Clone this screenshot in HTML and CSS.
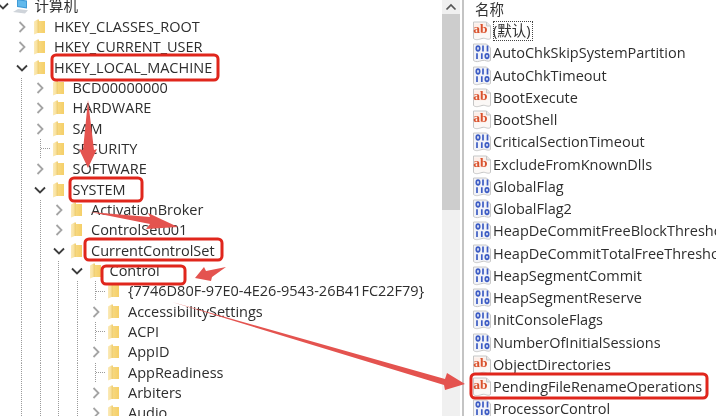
FILE: index.html
```html
<!DOCTYPE html>
<html lang="zh-CN">
<head>
<meta charset="utf-8">
<title>注册表编辑器</title>
<link rel="stylesheet" href="styles.css">
</head>
<body>
<svg class="defs" width="0" height="0" aria-hidden="true">
  <defs>
    <linearGradient id="fold" x1="0" x2="1" y1="0" y2="0">
      <stop offset="0" stop-color="#fbeab8"/>
      <stop offset="0.3" stop-color="#f8e09a"/>
      <stop offset="0.36" stop-color="#e9c66a"/>
      <stop offset="0.45" stop-color="#f7d87f"/>
      <stop offset="1" stop-color="#f5cf68"/>
    </linearGradient>
  </defs>
  <symbol id="right" viewBox="0 0 10 12"><path d="M2.500 1 7.500 6l-5 5" fill="none" stroke="#a4a4a4" stroke-width="1.800"/></symbol>
  <symbol id="down" viewBox="0 0 12 10"><path d="M1 2.500 6 7.500l5-5" fill="none" stroke="#3d3d3d" stroke-width="1.800"/></symbol>
  <symbol id="folder" viewBox="0 0 11 16">
    <path d="M0 2.500 3.500 .5H5V2h6v12H3.500L0 15.500z" fill="url(#fold)"/>
  </symbol>
  <symbol id="ab" viewBox="0 0 18 20">
    <path d="M.5 1h13l4 4v12.500c-3 2-5-1-8.500 0S3 19.500.5 17.500z" fill="#fbf8f6" stroke="#c6c6c6"/>
    <path d="M13.500 1v4h4" fill="#e6e6e6" stroke="#c6c6c6"/>
    <path d="M1 2.500h12v10H1z" fill="#fdeee8"/>
    <text x="7.500" y="12" class="ab-text">ab</text>
  </symbol>
  <symbol id="bin" viewBox="0 0 18 20">
    <path d="M.5 1h13l4 4v12.500c-3 2-5-1-8.500 0S3 19.500.5 17.500z" fill="#f2f3f8" stroke="#c8c8c8"/>
    <g fill="none" stroke="#3d5cc4" stroke-width="1.700">
      <ellipse cx="5" cy="5.500" rx="1.700" ry="2.300"/>
      <path d="M10 2.600v5.800M14.500 2.600v5.800"/>
      <path d="M4 10.200v5.800M8.800 10.200v5.800"/>
      <ellipse cx="14" cy="13.100" rx="1.700" ry="2.300"/>
    </g>
  </symbol>
</svg>

<main class="editor">
  <section class="tree">
    <div class="row root"><span class="cell"><svg class="chev-down"><use href="#down"/></svg></span><svg class="computer" viewBox="0 0 16 15"><path d="M4 0l10 1.500v8L4 8z" fill="#3f9bd8"/><path d="M5 1.300l8 1.200v5.800L5 7.100z" fill="#62b9ec"/><path d="M0 13l5-3 10 1.200-3 3.300z" fill="#cfd4da"/></svg><span class="label">计算机</span></div>

    <div class="row"><span class="cell"><svg class="chev-right"><use href="#right"/></svg></span><svg class="folder"><use href="#folder"/></svg><span class="label">HKEY_CLASSES_ROOT</span></div>
    <div class="row"><span class="cell"><svg class="chev-right"><use href="#right"/></svg></span><svg class="folder"><use href="#folder"/></svg><span class="label">HKEY_CURRENT_USER</span></div>
    <div class="row"><span class="cell"><svg class="chev-down"><use href="#down"/></svg></span><svg class="folder"><use href="#folder"/></svg><span class="label">HKEY_LOCAL_MACHINE</span></div>

    <div class="row"><i class="guide"></i><span class="cell"><svg class="chev-right"><use href="#right"/></svg></span><svg class="folder"><use href="#folder"/></svg><span class="label">BCD00000000</span></div>
    <div class="row"><i class="guide"></i><span class="cell"><svg class="chev-right"><use href="#right"/></svg></span><svg class="folder"><use href="#folder"/></svg><span class="label">HARDWARE</span></div>
    <div class="row"><i class="guide"></i><span class="cell"><svg class="chev-right"><use href="#right"/></svg></span><svg class="folder"><use href="#folder"/></svg><span class="label">SAM</span></div>
    <div class="row"><i class="guide"></i><i class="guide tick"></i><svg class="folder"><use href="#folder"/></svg><span class="label">SECURITY</span></div>
    <div class="row"><i class="guide"></i><span class="cell"><svg class="chev-right"><use href="#right"/></svg></span><svg class="folder"><use href="#folder"/></svg><span class="label">SOFTWARE</span></div>
    <div class="row"><i class="guide"></i><span class="cell"><svg class="chev-down"><use href="#down"/></svg></span><svg class="folder"><use href="#folder"/></svg><span class="label">SYSTEM</span></div>

    <div class="row"><i class="guide"></i><i class="guide"></i><span class="cell"><svg class="chev-right"><use href="#right"/></svg></span><svg class="folder"><use href="#folder"/></svg><span class="label">ActivationBroker</span></div>
    <div class="row"><i class="guide"></i><i class="guide"></i><span class="cell"><svg class="chev-right"><use href="#right"/></svg></span><svg class="folder"><use href="#folder"/></svg><span class="label">ControlSet001</span></div>
    <div class="row"><i class="guide"></i><i class="guide"></i><span class="cell"><svg class="chev-down"><use href="#down"/></svg></span><svg class="folder"><use href="#folder"/></svg><span class="label">CurrentControlSet</span></div>

    <div class="row"><i class="guide"></i><i class="guide"></i><i class="guide"></i><span class="cell"><svg class="chev-down"><use href="#down"/></svg></span><svg class="folder"><use href="#folder"/></svg><span class="label">Control</span></div>

    <div class="row"><i class="guide"></i><i class="guide"></i><i class="guide"></i><i class="guide"></i><i class="guide tick"></i><svg class="folder"><use href="#folder"/></svg><span class="label">{7746D80F-97E0-4E26-9543-26B41FC22F79}</span></div>
    <div class="row"><i class="guide"></i><i class="guide"></i><i class="guide"></i><i class="guide"></i><span class="cell"><svg class="chev-right"><use href="#right"/></svg></span><svg class="folder"><use href="#folder"/></svg><span class="label">AccessibilitySettings</span></div>
    <div class="row"><i class="guide"></i><i class="guide"></i><i class="guide"></i><i class="guide"></i><i class="guide tick"></i><svg class="folder"><use href="#folder"/></svg><span class="label">ACPI</span></div>
    <div class="row"><i class="guide"></i><i class="guide"></i><i class="guide"></i><i class="guide"></i><span class="cell"><svg class="chev-right"><use href="#right"/></svg></span><svg class="folder"><use href="#folder"/></svg><span class="label">AppID</span></div>
    <div class="row"><i class="guide"></i><i class="guide"></i><i class="guide"></i><i class="guide"></i><i class="guide tick"></i><svg class="folder"><use href="#folder"/></svg><span class="label">AppReadiness</span></div>
    <div class="row"><i class="guide"></i><i class="guide"></i><i class="guide"></i><i class="guide"></i><span class="cell"><svg class="chev-right"><use href="#right"/></svg></span><svg class="folder"><use href="#folder"/></svg><span class="label">Arbiters</span></div>
    <div class="row"><i class="guide"></i><i class="guide"></i><i class="guide"></i><i class="guide"></i><span class="cell"><svg class="chev-right"><use href="#right"/></svg></span><svg class="folder"><use href="#folder"/></svg><span class="label">Audio</span></div>
  </section>

  <div class="scrollbar">
    <div class="scroll-btn"><svg class="scroll-arrow" viewBox="0 0 12 8"><path d="M1.500 6.500 6 2l4.500 4.500" fill="none" stroke="#555" stroke-width="1.700"/></svg></div>
    <div class="scroll-thumb"></div>
  </div>
  <div class="divider"></div>

  <section class="values">
    <div class="values-head">名称</div>
    <div class="value"><svg class="vicon"><use href="#ab"/></svg><span class="vname selected">(默认)</span></div>
    <div class="value"><svg class="vicon"><use href="#bin"/></svg><span class="vname">AutoChkSkipSystemPartition</span></div>
    <div class="value"><svg class="vicon"><use href="#bin"/></svg><span class="vname">AutoChkTimeout</span></div>
    <div class="value"><svg class="vicon"><use href="#ab"/></svg><span class="vname">BootExecute</span></div>
    <div class="value"><svg class="vicon"><use href="#ab"/></svg><span class="vname">BootShell</span></div>
    <div class="value"><svg class="vicon"><use href="#bin"/></svg><span class="vname">CriticalSectionTimeout</span></div>
    <div class="value"><svg class="vicon"><use href="#ab"/></svg><span class="vname">ExcludeFromKnownDlls</span></div>
    <div class="value"><svg class="vicon"><use href="#bin"/></svg><span class="vname">GlobalFlag</span></div>
    <div class="value"><svg class="vicon"><use href="#bin"/></svg><span class="vname">GlobalFlag2</span></div>
    <div class="value"><svg class="vicon"><use href="#bin"/></svg><span class="vname">HeapDeCommitFreeBlockThreshold</span></div>
    <div class="value"><svg class="vicon"><use href="#bin"/></svg><span class="vname">HeapDeCommitTotalFreeThreshold</span></div>
    <div class="value"><svg class="vicon"><use href="#bin"/></svg><span class="vname">HeapSegmentCommit</span></div>
    <div class="value"><svg class="vicon"><use href="#bin"/></svg><span class="vname">HeapSegmentReserve</span></div>
    <div class="value"><svg class="vicon"><use href="#bin"/></svg><span class="vname">InitConsoleFlags</span></div>
    <div class="value"><svg class="vicon"><use href="#bin"/></svg><span class="vname">NumberOfInitialSessions</span></div>
    <div class="value"><svg class="vicon"><use href="#ab"/></svg><span class="vname">ObjectDirectories</span></div>
    <div class="value"><svg class="vicon"><use href="#ab"/></svg><span class="vname">PendingFileRenameOperations</span></div>
    <div class="value"><svg class="vicon"><use href="#bin"/></svg><span class="vname">ProcessorControl</span></div>
  </section>

  <svg class="marks" viewBox="0 0 720 416" aria-hidden="true">
    <g class="arrows">
      <path d="M88 100 L94 150 L97 149 L88 168 L79 149 L83 150 Z"/>
      <path d="M90 212 L150 217 L148 213 L178 227 L146 229 L150 224 Z"/>
      <path d="M226 267 L212 277 L211 281 L195 278 L204 267 L206 271 Z"/>
      <path d="M172 302 L445 379 L447 373 L465 384 L445 390 L444 385 Z"/>
    </g>
    <g class="boxes">
      <rect x="52" y="55" width="166" height="25" rx="4"/>
      <rect x="70" y="178" width="72" height="23" rx="4"/>
      <rect x="85" y="239" width="137" height="21" rx="4"/>
      <rect x="102" y="266" width="83" height="18" rx="4"/>
      <rect x="471" y="374" width="236" height="24" rx="4"/>
    </g>
  </svg>
</main>
</body>
</html>
```
FILE: styles.css
```css
html, body {
  margin: 0;
  padding: 0;
  background: #fff;
}

.defs {
  position: absolute;
}

.editor {
  position: relative;
  display: flex;
  width: 720px;
  height: 416px;
  overflow: hidden;
  background: #fff;
  color: #2e2e2e;
  font-family: "Open Sans", "Noto Sans CJK SC", sans-serif;
  font-size: 14.5px;
  filter: blur(0.35px);
}

.tree {
  flex: 0 0 442px;
  margin-top: -3.7px;
  padding-left: 12.5px;
  box-sizing: border-box;
  overflow: hidden;
}

.row {
  display: flex;
  align-items: center;
  height: 20.35px;
  white-space: nowrap;
}

.root {
  margin-left: -18.5px;
}

.cell {
  flex: 0 0 18.5px;
  display: flex;
  justify-content: center;
  align-items: center;
}

.guide {
  flex: 0 0 18.5px;
  align-self: stretch;
  background: repeating-linear-gradient(#9a9a9a 0 1px, transparent 1px 2px) center / 1px 100% no-repeat;
}

.tick {
  background:
    repeating-linear-gradient(#9a9a9a 0 1px, transparent 1px 2px) center / 1px 100% no-repeat,
    repeating-linear-gradient(90deg, #9a9a9a 0 1px, transparent 1px 2px) right center / 9px 1px no-repeat;
}

.chev-right {
  width: 10px;
  height: 12px;
}

.chev-down {
  width: 12px;
  height: 10px;
}

.folder {
  flex: none;
  width: 11px;
  height: 16px;
  margin-left: 3px;
  margin-right: 9px;
}

.computer {
  flex: none;
  width: 16px;
  height: 15px;
  margin-right: 6px;
}

.label {
  line-height: 20px;
}

.scrollbar {
  flex: 0 0 18px;
  display: flex;
  flex-direction: column;
  background: #f0f0f0;
}

.scroll-btn {
  flex: 0 0 14px;
  display: flex;
  align-items: center;
  justify-content: center;
}

.scroll-arrow {
  width: 12px;
  height: 8px;
}

.scroll-thumb {
  flex: 0 0 196px;
  background: #cdcdcd;
}

.divider {
  flex: 0 0 2px;
  margin: 0 2px 0 2px;
  background: #c4c4c4;
}

.values {
  flex: 1;
  min-width: 0;
  overflow: hidden;
  margin-right: 4px;
}

.values-head {
  height: 20px;
  padding-left: 9px;
  margin-top: -3px;
  padding-top: 3px;
  line-height: 20px;
  color: #333;
}

.value {
  display: flex;
  align-items: center;
  height: 22.25px;
  padding-left: 7px;
  white-space: nowrap;
}

.vicon {
  flex: none;
  width: 18px;
  height: 20px;
  margin-right: 2px;
}

.ab-text {
  font-family: "Liberation Serif", serif;
  font-size: 13.5px;
  font-weight: 700;
  fill: #d9512c;
  text-anchor: middle;
}

.vname {
  line-height: 20px;
}

.selected {
  outline: 1px dotted #444;
  outline-offset: -1px;
  padding: 0 2px 0 0;
}

.marks {
  position: absolute;
  left: 0;
  top: 0;
  width: 720px;
  height: 416px;
  pointer-events: none;
}

.arrows path {
  fill: #e4534f;
}

.boxes rect {
  fill: none;
  stroke: #e0261c;
  stroke-width: 3;
}
```
